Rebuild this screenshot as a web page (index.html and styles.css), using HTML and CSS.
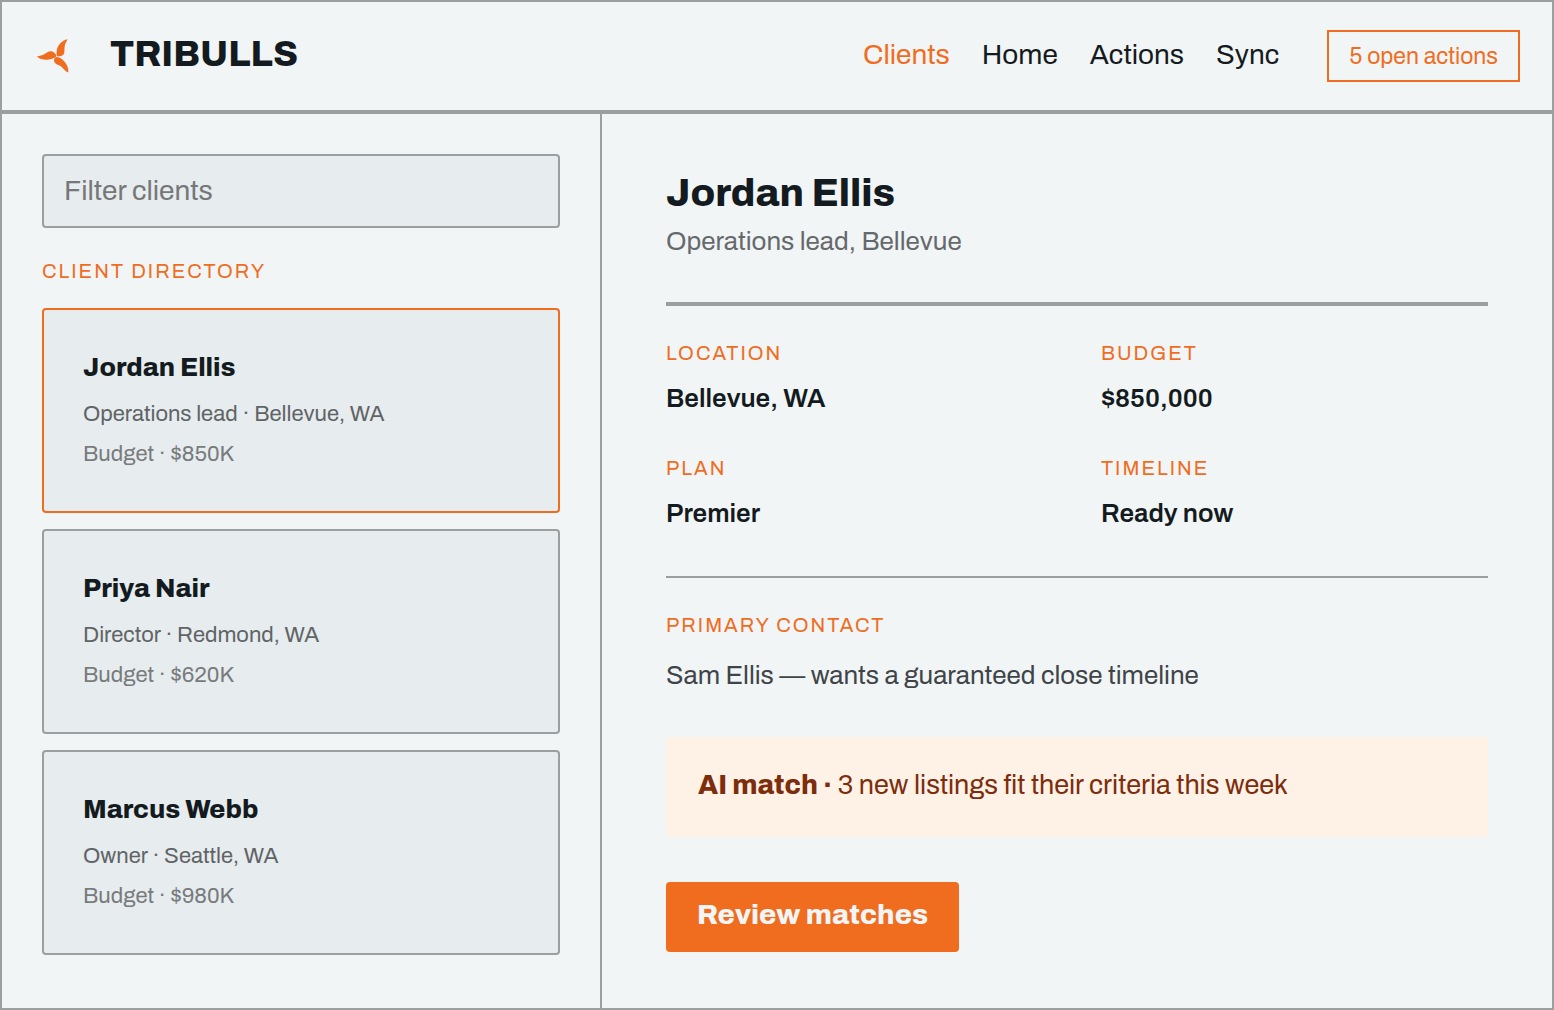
FILE: index.html
```html
<!DOCTYPE html>
<html lang="en">
<head>
<meta charset="utf-8">
<meta name="viewport" content="width=device-width, initial-scale=1">
<title>Tribulls – Clients</title>
<link rel="stylesheet" href="styles.css">
</head>
<body>
<div class="app">
  <header class="topbar">
    <a class="brand" href="#">
      <svg class="brand-mark" viewBox="0 0 36 36" aria-hidden="true">
        <path d="M31.500 1.200C26 2 21 7.500 20.600 13.500C20.400 16 20.600 17.600 21.400 18.300C23 18.700 26 18.300 27.800 16C29 14 28 11 28.800 7.500C29.400 4.800 30.700 3.200 31.500 1.200Z"/>
        <path d="M1 18.500C6 17.500 8 16.500 11 14.500C13.500 12.900 16.500 12.900 18.500 15C20 16.300 20.600 17.600 20.200 18.600C18 20.600 16 20.900 13 21.500C8.500 22.300 4 21.500 1 18.500Z"/>
        <path d="M32.200 34.500C28 33 27 28.500 22.500 27C19.500 26 17.900 24.500 18 22C18.200 19.800 19.300 18.800 21 18.900C23.500 19.200 26 20.500 28 23C30.500 26 33 30 32.200 34.500Z"/>
      </svg>
      <span class="brand-name">TRIBULLS</span>
    </a>
    <nav class="nav" aria-label="Main">
      <a class="nav-link nav-link-active" href="#" aria-current="page">Clients</a>
      <a class="nav-link" href="#">Home</a>
      <a class="nav-link" href="#">Actions</a>
      <a class="nav-link" href="#">Sync</a>
    </nav>
    <button class="open-actions" type="button">5 open actions</button>
  </header>

  <div class="content">
    <aside class="sidebar">
      <input class="filter" type="text" placeholder="Filter clients" aria-label="Filter clients">
      <h2 class="label directory-label">CLIENT DIRECTORY</h2>
      <div class="cards">
        <button class="card card-selected" type="button">
          <span class="card-name">Jordan Ellis</span>
          <span class="card-role">Operations lead · Bellevue, WA</span>
          <span class="card-budget">Budget · $850K</span>
        </button>
        <button class="card" type="button">
          <span class="card-name">Priya Nair</span>
          <span class="card-role">Director · Redmond, WA</span>
          <span class="card-budget">Budget · $620K</span>
        </button>
        <button class="card" type="button">
          <span class="card-name">Marcus Webb</span>
          <span class="card-role">Owner · Seattle, WA</span>
          <span class="card-budget">Budget · $980K</span>
        </button>
      </div>
    </aside>

    <main class="detail">
      <div class="detail-head">
        <h1 class="detail-name">Jordan Ellis</h1>
        <p class="detail-role">Operations lead, Bellevue</p>
      </div>
      <dl class="facts">
        <div><dt class="label">LOCATION</dt><dd class="fact-value">Bellevue, WA</dd></div>
        <div><dt class="label">BUDGET</dt><dd class="fact-value">$850,000</dd></div>
        <div><dt class="label">PLAN</dt><dd class="fact-value">Premier</dd></div>
        <div><dt class="label">TIMELINE</dt><dd class="fact-value">Ready now</dd></div>
      </dl>
      <section class="contact">
        <h2 class="label">PRIMARY CONTACT</h2>
        <p class="contact-text">Sam Ellis — wants a guaranteed close timeline</p>
      </section>
      <p class="match"><strong class="match-title">AI match ·</strong> 3 new listings fit their criteria this week</p>
      <button class="review" type="button">Review matches</button>
    </main>
  </div>
</div>
</body>
</html>
```
FILE: styles.css
```css
:root {
  --bg: #f1f5f6;
  --surface: #e7ecee;
  --line: #9b9f9f;
  --ink: #141b20;
  --accent: #f06d1f;
}

* {
  box-sizing: border-box;
}

body {
  margin: 0;
  background: var(--bg);
  color: var(--ink);
  font-family: Archivo, "Liberation Sans", Arial, sans-serif;
}

h1, h2, p, dl, dd {
  margin: 0;
}

button, input {
  font-family: inherit;
}

button {
  cursor: pointer;
}

.app {
  display: flex;
  flex-direction: column;
  min-height: 100vh;
  border: 2px solid var(--line);
}

.topbar {
  display: flex;
  align-items: center;
  padding: 28px 32px 28px 34px;
  border-bottom: 4px solid var(--line);
}

.brand {
  display: flex;
  align-items: center;
  gap: 38px;
  margin-right: auto;
  color: inherit;
  text-decoration: none;
}

.brand-mark {
  width: 36px;
  height: 36px;
  fill: var(--accent);
}

.brand-name {
  padding-bottom: 4px;
  font-size: 36px;
  font-weight: 800;
  line-height: 44px;
}

.nav {
  display: flex;
  gap: 32px;
  padding-bottom: 2px;
}

.nav-link {
  color: inherit;
  font-size: 28px;
  line-height: 32px;
  text-decoration: none;
}

.nav-link-active {
  color: var(--accent);
}

.open-actions {
  height: 52px;
  margin-left: 48px;
  padding: 0 20px;
  border: 2px solid var(--accent);
  background: transparent;
  color: var(--accent);
  font-size: 23px;
}

.content {
  display: grid;
  flex: 1;
  grid-template-columns: 600px 1fr;
}

.sidebar {
  padding: 40px;
  border-right: 2px solid var(--line);
}

.filter {
  display: block;
  width: 100%;
  height: 74px;
  padding: 0 20px 2px;
  border: 2px solid var(--line);
  border-radius: 4px;
  background: var(--surface);
  color: var(--ink);
  font-size: 28px;
}

.filter::placeholder {
  color: #757778;
}

.label {
  color: var(--accent);
  font-size: 20px;
  font-weight: 400;
  letter-spacing: 2px;
  line-height: 24px;
}

.directory-label {
  margin: 31px 0 25px;
}

.cards {
  display: grid;
  gap: 16px;
}

.card {
  display: flex;
  flex-direction: column;
  width: 100%;
  padding: 39px 39px 38px;
  border: 2px solid var(--line);
  border-radius: 4px;
  background: var(--surface);
  color: var(--ink);
  text-align: left;
}

.card-selected {
  border-color: var(--accent);
}

.card-name {
  margin-bottom: 9px;
  font-size: 26px;
  font-weight: 800;
  line-height: 36px;
}

.card-role,
.card-budget {
  color: #5f6466;
  font-size: 22px;
  line-height: 40px;
}

.card-budget {
  margin-bottom: -1px;
  color: #777b7d;
}

.detail {
  padding: 55px 64px;
}

.detail-head {
  padding-bottom: 45px;
  border-bottom: 4px solid var(--line);
}

.detail-name {
  font-size: 39px;
  font-weight: 800;
  line-height: 48px;
}

.detail-role {
  margin-top: 8px;
  color: #66696c;
  font-size: 26px;
  line-height: 32px;
}

.facts {
  display: grid;
  grid-template-columns: 1fr 1fr;
  gap: 42px 48px;
  padding: 35px 0 47px;
  border-bottom: 2px solid var(--line);
}

.fact-value {
  margin-top: 17px;
  font-size: 26px;
  font-weight: 600;
  line-height: 32px;
}

.contact {
  padding-top: 35px;
}

.contact-text {
  margin-top: 22px;
  color: #3e4447;
  font-size: 26px;
  line-height: 32px;
}

.match {
  margin-top: 46px;
  padding: 32px 32px 36px;
  background: #fef1e6;
  color: #7c2d0c;
  font-size: 27px;
  line-height: 32px;
}

.match-title {
  font-weight: 800;
}

.review {
  height: 70px;
  margin-top: 45px;
  padding: 0 31px 6px;
  border: 0;
  border-radius: 4px;
  background: var(--accent);
  color: var(--bg);
  font-size: 28px;
  font-weight: 800;
}
```
